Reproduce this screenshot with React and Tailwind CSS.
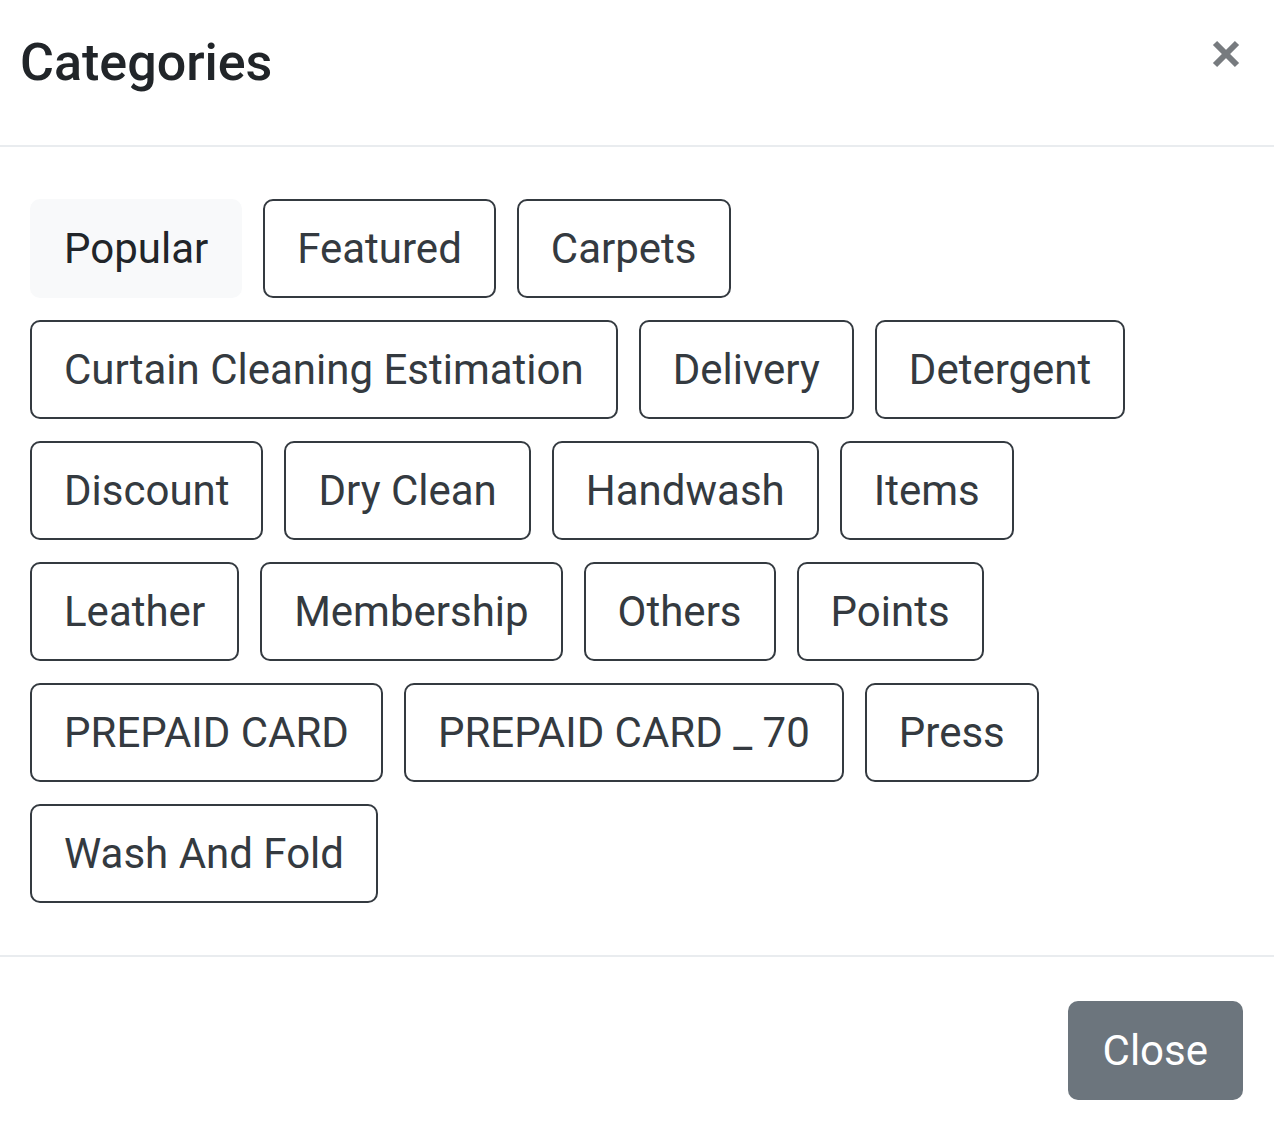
const categories = [
  "Featured",
  "Carpets",
  "Curtain Cleaning Estimation",
  "Delivery",
  "Detergent",
  "Discount",
  "Dry Clean",
  "Handwash",
  "Items",
  "Leather",
  "Membership",
  "Others",
  "Points",
  "PREPAID CARD",
  "PREPAID CARD _ 70",
  "Press",
  "Wash And Fold",
];

export default function App() {
  return (
    <div className="min-h-screen bg-white font-['Roboto',sans-serif] text-[#212529]">
      {/* Header */}
      <div className="flex h-[147px] items-start justify-between border-b-2 border-[#e9ecef] pl-[20px] pr-[33px] pt-[33px]">
        <h5 className="text-[52px] font-medium leading-[60px] text-[#212529]">Categories</h5>
        <button type="button" className="mt-[6px] flex h-[30px] w-[30px] items-center justify-center">
          <svg viewBox="0 0 28 28" className="h-[28px] w-[28px]">
            <line x1="3" y1="3" x2="25" y2="25" stroke="#777b7f" strokeWidth="6" />
            <line x1="25" y1="3" x2="3" y2="25" stroke="#777b7f" strokeWidth="6" />
          </svg>
        </button>
      </div>

      {/* Body */}
      <div className="flex flex-wrap gap-x-[21px] gap-y-[22px] pb-[52px] pl-[30px] pr-[50px] pt-[52px]">
        <button
          type="button"
          className="flex h-[99px] items-center rounded-[10px] border-2 border-[#f8f9fa] bg-[#f8f9fa] px-[32px] text-[42px] text-[#212529]"
        >
          Popular
        </button>
        {categories.map((c) => (
          <button
            key={c}
            type="button"
            className="flex h-[99px] items-center rounded-[10px] border-2 border-[#343a40] bg-white px-[32px] text-[42px] text-[#343a40]"
          >
            {c}
          </button>
        ))}
      </div>

      {/* Footer */}
      <div className="flex justify-end border-t-2 border-[#e9ecef] pb-[36px] pr-[31px] pt-[44px]">
        <button
          type="button"
          className="flex h-[99px] items-center rounded-[10px] bg-[#6c757d] px-[35px] text-[42px] text-white"
        >
          Close
        </button>
      </div>
    </div>
  );
}
